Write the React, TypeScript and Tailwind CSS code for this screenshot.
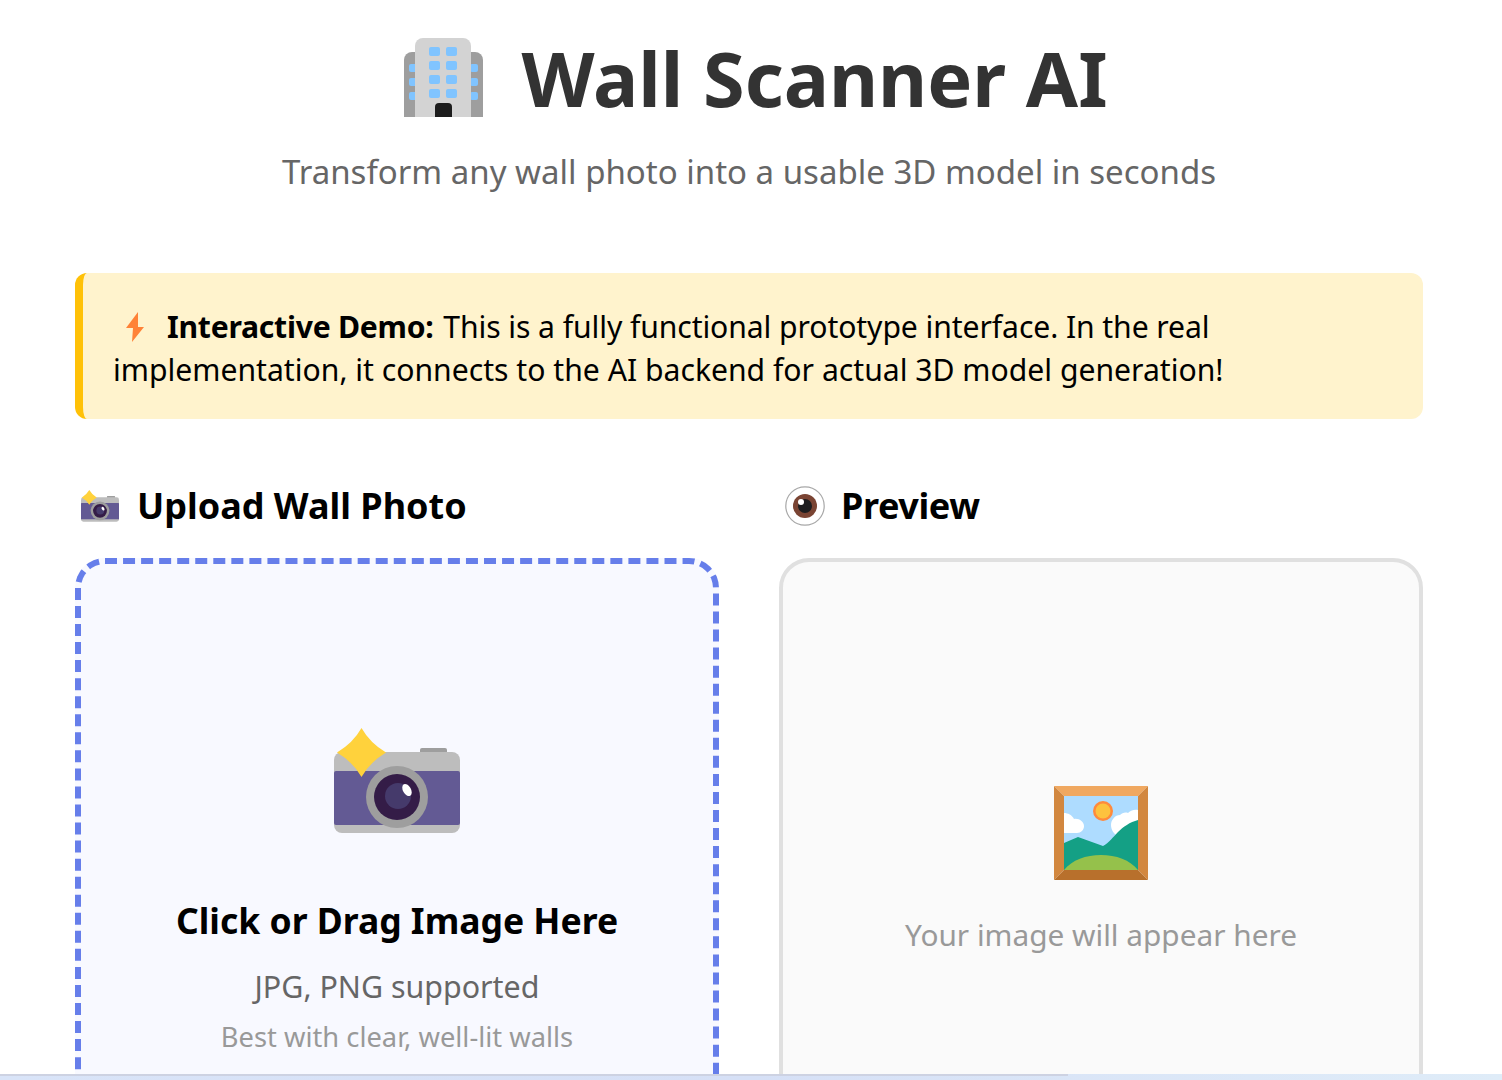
const sans = { fontFamily: '"Noto Sans", "Open Sans", sans-serif' };

function BuildingIcon({ className }: { className?: string }) {
  const wins = [9, 23, 37, 51];
  const sideWins = [26, 40, 54];
  return (
    <svg viewBox="0 0 79 80" className={className}>
      <path d="M0 79V22a8 8 0 0 1 8-8h63a8 8 0 0 1 8 8v57z" fill="#9e9e9e" />
      {sideWins.map((y) => (
        <g key={y}>
          <rect x="5" y={y} width="8" height="8" rx="2" fill="#80c4ff" />
          <rect x="66" y={y} width="8" height="8" rx="2" fill="#80c4ff" />
        </g>
      ))}
      <path d="M11 79V8a8 8 0 0 1 8-8h40a8 8 0 0 1 8 8v71z" fill="#d3d3d3" />
      {wins.map((y) => (
        <g key={y}>
          <rect x="25" y={y} width="11" height="9" rx="2" fill="#80c4ff" />
          <rect x="42" y={y} width="11" height="9" rx="2" fill="#80c4ff" />
        </g>
      ))}
      <path d="M31 79V69a4 4 0 0 1 4-4h9a4 4 0 0 1 4 4v10z" fill="#1c1c1c" />
    </svg>
  );
}

function CameraIcon({ className }: { className?: string }) {
  return (
    <svg viewBox="0 0 126 106" className={className}>
      <rect x="86" y="20" width="27" height="8" rx="2" fill="#9e9e9e" />
      <rect x="0" y="24" width="126" height="81" rx="8" fill="#bdbdbd" />
      <path d="M0 45a2 2 0 0 1 2-2h122a2 2 0 0 1 2 2v50a2 2 0 0 1-2 2H2a2 2 0 0 1-2-2z" fill="#635a94" />
      <circle cx="63" cy="69" r="31" fill="#9e9e9e" />
      <circle cx="63" cy="69" r="23" fill="#341c47" />
      <circle cx="64" cy="68" r="13" fill="#453a6b" />
      <ellipse cx="73" cy="62" rx="4" ry="6.5" transform="rotate(-30 73 62)" fill="#fff" />
      <path d="M27.5 0Q36 15 52 24.5 36 34 27.5 49 19 34 3 24.5 19 15 27.5 0z" fill="#ffd23c" />
    </svg>
  );
}

function EyeIcon({ className }: { className?: string }) {
  return (
    <svg viewBox="0 0 40 40" className={className}>
      <circle cx="20" cy="20" r="19.2" fill="#fff" stroke="#a8a8a8" strokeWidth="1.2" />
      <circle cx="20" cy="20" r="12" fill="#7a4433" />
      <circle cx="20" cy="20" r="7" fill="#1d1d1f" />
      <circle cx="16" cy="16" r="3" fill="#fff" />
    </svg>
  );
}

function PictureIcon({ className }: { className?: string }) {
  return (
    <svg viewBox="0 0 94 94" className={className}>
      <path d="M0 0h94L84 10H10z" fill="#f0a860" />
      <path d="M0 0l10 10v74L0 94z" fill="#d2873f" />
      <path d="M94 0L84 10v74l10 10z" fill="#d2873f" />
      <path d="M0 94l10-10h74l10 10z" fill="#b8702c" />
      <rect x="10" y="10" width="74" height="74" fill="#aedcff" />
      <circle cx="49" cy="25" r="10" fill="#ff8a3c" />
      <circle cx="49" cy="25" r="7.5" fill="#fdc23e" />
      <path d="M10 27c4 0 8 2 10 6 5-1 10 3 10 7s-3 7-7 7H10z" fill="#fff" />
      <path d="M84 24c-4-1-8 1-10 3-3-1-6 0-8 2-5 0-9 5-9 10 0 5 3 9 7 11l20-10z" fill="#fff" />
      <path d="M10 57l14-6 25 9c6-3 10-9 15-14s12-10 20-12v50H10z" fill="#14a085" />
      <path d="M10 84c8-10 22-15 37-15s29 5 37 15z" fill="#95c14b" />
    </svg>
  );
}

function BoltIcon({ className }: { className?: string }) {
  return (
    <svg viewBox="0 0 20 32" className={className}>
      <path d="M13 1L1 17h7L7 31 19 16h-6z" fill="#ff8237" />
    </svg>
  );
}

export default function App() {
  return (
    <div className="relative h-[1080px] w-full overflow-hidden bg-white" style={sans}>
      <div className="pl-[75px] pr-[79px]">
        <div className="flex items-center justify-center gap-[38px] pl-[14px] pt-[28px]">
          <BuildingIcon className="h-[80px] w-[79px]" />
          <h1 className="text-[75.6px] leading-[100px] font-bold text-[#333]">Wall Scanner AI</h1>
        </div>
        <p className="mt-[22px] text-center text-[33px] leading-[44px] text-[#666]">
          Transform any wall photo into a usable 3D model in seconds
        </p>

        <div className="mt-[79px] rounded-[12px] border-l-[8px] border-[#ffc107] bg-[#fff3cd] px-[30px] pt-[32px] pb-[28px] text-[30.15px] leading-[43px] text-black">
          <BoltIcon className="ml-[12px] mr-[22px] inline-block h-[32px] w-[20px] align-[-5px]" />
          <strong className="mr-[2px] font-bold tracking-[-0.25px]">Interactive Demo:</strong>{" "}
          <span className="tracking-[-0.09px]">This is a fully functional prototype interface. In the real</span> implementation, it connects to the AI backend for actual 3D model generation!
        </div>

        <div className="mt-[60px] grid grid-cols-2 gap-[60px]">
          <div>
            <h2 className="flex h-[54px] items-center gap-[18px] pl-[6px] text-[36px] font-bold text-black">
              <CameraIcon className="h-[32px] w-[38px]" />
              Upload Wall Photo
            </h2>
            <div className="mt-[25px] flex h-[700px] flex-col items-center rounded-[30px] border-[6px] border-dashed border-[#667eea] bg-[#f8f9ff] pt-[164px]">
              <CameraIcon className="h-[106px] w-[126px]" />
              <h3 className="mt-[61px] text-[35.5px] leading-[50px] font-bold text-black">Click or Drag Image Here</h3>
              <p className="mt-[17px] text-[30.4px] leading-[50px] text-[#666]">JPG, PNG supported</p>
              <p className="text-[27.3px] leading-[50px] text-[#999]">Best with clear, well-lit walls</p>
            </div>
          </div>
          <div>
            <h2 className="flex h-[54px] items-center gap-[16px] pl-[6px] text-[36px] font-bold tracking-[-0.4px] text-black">
              <EyeIcon className="h-[40px] w-[40px]" />
              Preview
            </h2>
            <div className="mt-[25px] flex h-[700px] flex-col items-center rounded-[30px] border-[4px] border-[#e0e0e0] bg-[#fafafa] pt-[224px]">
              <PictureIcon className="h-[94px] w-[94px]" />
              <p className="mt-[33px] text-[29.8px] leading-[44px] text-[#999]">Your image will appear here</p>
            </div>
          </div>
        </div>
      </div>

      {/* scrollbar strip over the bottom edge */}
      <div className="absolute inset-x-0 bottom-0 h-[6px] bg-[linear-gradient(90deg,#d9e4f8,#d6e0f6_50%,#dfecf8)]">
        <div className="h-[2px] w-[1068px] bg-[#cdd2e2]" />
      </div>
    </div>
  );
}
